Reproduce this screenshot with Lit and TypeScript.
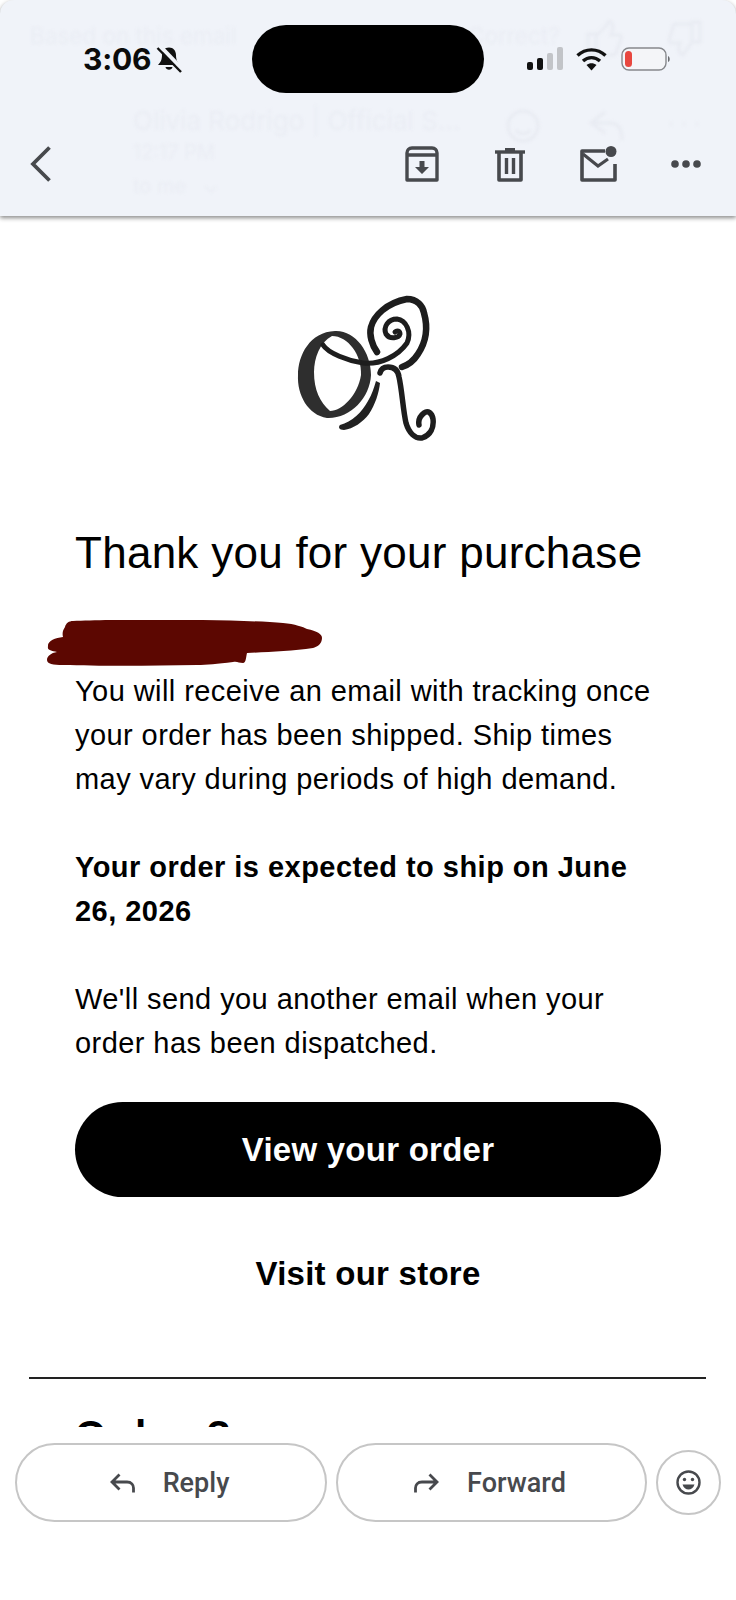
import { LitElement, html, css } from "lit";
import { customElement } from "lit/decorators.js";

const ink = "#47494d";

@customElement("app-root")
export class AppRoot extends LitElement {
  static styles = css`
    :host { display: flex; flex-direction: column; width: 736px; height: 1600px; background: #fff; overflow: hidden;
      font-family: "Liberation Sans", Arial, sans-serif; color: #000; }
    svg { display: block; flex: none; }
    .header { position: relative; z-index: 2; height: 216px; flex: none; background: #f0f3f9; box-shadow: 0 2px 4px rgba(60,60,60,.6); border-radius: 14px 14px 0 0; }
    .ghost { position: absolute; inset: 0; filter: blur(1.4px); color: #eaedf4; font-family: "Inter", sans-serif; }
    .ghost > * { position: absolute; white-space: nowrap; }
    .g1 { left: 30px; top: 22px; font-size: 22.5px; }
    .g2 { left: 468px; top: 22px; font-size: 22.5px; }
    .g3 { left: 133px; top: 105px; font-size: 26px; font-weight: 400; }
    .g4 { left: 133px; top: 140px; font-size: 20px; }
    .g5 { left: 133px; top: 174px; font-size: 20px; }
    .status { position: relative; display: flex; align-items: center; padding-top: 25px; height: 68px; }
    .time { width: 169px; padding-left: 83px; display: flex; align-items: center; gap: 5px; font: 700 30px/68px "Inter", sans-serif; letter-spacing: -.2px; color: #0b0b0b; }
    .island { width: 232px; height: 68px; border-radius: 34px; background: #000; flex: none; }
    .sys { display: flex; align-items: center; margin-left: 43px; }
    .wifi { margin-left: 13px; }
    .batt { margin-left: 14px; }
    .tools { position: relative; display: flex; align-items: center; height: 40px; margin-top: 51px; padding-left: 30px; }
    .a { margin-left: 353px; }
    .b { margin-left: 56px; }
    .c { margin-left: 55px; }
    .d { margin-left: 53px; }
    .main { height: 1211px; flex: none; overflow: hidden; box-sizing: border-box; padding: 64px 75px 0; }
    .logo { margin-left: 195px; filter: blur(.7px); }
    h1 { margin: 73px 0 0; font-weight: 400; font-size: 44px; line-height: 60px; letter-spacing: .27px; }
    .redact { margin: 37px 0 0 -28px; }
    p { margin: 3px 0 0; font-size: 29px; line-height: 44px; letter-spacing: .43px; }
    p + p { margin-top: 44px; }
    p b { font-weight: 700; letter-spacing: .47px; }
    .cta { display: flex; align-items: center; justify-content: center; height: 95px; margin-top: 37px; border-radius: 48px; background: #000; color: #fff; font-size: 33px; font-weight: 700; letter-spacing: .25px; }
    .store { margin-top: 57px; text-align: center; font-size: 33px; line-height: 40px; font-weight: 700; letter-spacing: .25px; }
    hr { margin: 83px -45px 0 -46px; border: 0; height: 2px; background: #222; }
    h2 { margin: 32px 0 0; font-size: 40px; line-height: 48px; font-weight: 700; }
    .bar { flex: 1; display: flex; align-items: flex-start; padding: 16px 0 0 15px; gap: 9px; background: #fff; }
    .pill { box-sizing: border-box; width: 312px; height: 79px; border: 2px solid #c6c6c6; border-radius: 40px; display: flex; align-items: center; justify-content: center; gap: 28px; padding-right: 3px;
      font: 500 27px "Roboto", sans-serif; color: #47494d; }
    .fw { width: 311px; }
    .smile { box-sizing: border-box; width: 65px; height: 65px; margin-top: 7px; border: 2px solid #c6c6c6; border-radius: 50%; display: flex; align-items: center; justify-content: center; }
  `;

  render() {
    return html`
      <div class="header">
        <div class="ghost">
          <span class="g1">Based on this email</span>
          <span class="g2">Correct?</span>
          <span class="g3">Olivia Rodrigo | Official S...</span>
          <span class="g4">12:17 PM</span>
          <span class="g5">to me &nbsp; ⌄</span>
          <svg style="left:585px;top:20px" width="140" height="40" viewBox="0 0 140 40" fill="none" stroke="#e8ebf2" stroke-width="3">
            <path d="M3 14v20h8V14zM11 16 21 6l3-5c6 2 4 10 2 14h8c2 0 3 2 2 4l-5 14c-1 2-2 2-3 2H11"/>
            <path d="M107 2v20h8V2zM107 4H91c-2 0-3 1-3 3l-4 13c0 2 1 3 3 3h8c-2 5-2 10 3 12l9-13"/>
          </svg>
          <svg style="left:505px;top:108px" width="200" height="36" viewBox="0 0 200 36" fill="none" stroke="#e8ebf2" stroke-width="3">
            <circle cx="18" cy="18" r="15"/><path d="M11 22c3 5 11 5 14 0"/>
            <path d="M100 4 86 15l14 10M87 15h18c8 0 12 5 12 17"/>
            <path d="M165 16h2M178 16h2M191 16h2"/>
          </svg>
        </div>
        <div class="status">
          <div class="time">3:06
            <svg width="26" height="27" viewBox="0 0 26 27">
              <path d="M13 1.500c-4.500 0-7 3.500-7 7.500 0 5-1.500 7.500-4 10h22c-2.500-2.500-4-5-4-10 0-4-2.500-7.500-7-7.500z" fill="#111"/>
              <path d="M9.500 21c.5 3.500 6.500 3.500 7 0z" fill="#111"/>
              <path d="M4 0 26 23" stroke="#f0f3f9" stroke-width="4"/>
              <path d="M1.500 2 25 26" stroke="#111" stroke-width="2.400"/>
            </svg>
          </div>
          <div class="island"></div>
          <div class="sys">
            <svg width="36" height="24" viewBox="0 0 36 24">
              <rect x="0" y="15" width="6" height="8" rx="2" fill="#111"/>
              <rect x="10" y="11" width="6" height="12" rx="2" fill="#111"/>
              <rect x="20" y="6" width="6" height="17" rx="2" fill="#c2c4c8"/>
              <rect x="30" y="0" width="6" height="23" rx="2" fill="#c2c4c8"/>
            </svg>
            <svg class="wifi" width="31" height="24" viewBox="0 0 31 24">
              <path d="M1.500 8.500C9.500 1 21.500 1 29.500 8.500" fill="none" stroke="#111" stroke-width="3.400"/>
              <path d="M7 14c5-4.500 12-4.500 17 0" fill="none" stroke="#111" stroke-width="3.400"/>
              <path d="M10.500 18c3-2.500 7-2.500 10 0l-5 5.500z" fill="#111"/>
            </svg>
            <svg class="batt" width="50" height="24" viewBox="0 0 50 24">
              <rect x="1" y="1" width="44" height="22" rx="7" fill="#f4f5f8" stroke="#86888c" stroke-width="1.400"/>
              <rect x="4" y="4" width="7" height="16" rx="3.500" fill="#e8473f"/>
              <path d="M47 9c2 .5 2.500 5.500 0 6z" fill="#6a6c70"/>
            </svg>
          </div>
        </div>
        <div class="tools">
          <svg width="22" height="38" viewBox="0 0 22 38"><path d="M19.500 2.500 3 19l16.500 16.500" fill="none" stroke=${ink} stroke-width="3.800"/></svg>
          <svg class="a" width="34" height="36" viewBox="0 0 34 36">
            <path d="M2 11V7c0-3 2-5 5-5h20c3 0 5 2 5 5v4M2 9h30v25H2z" fill="none" stroke=${ink} stroke-width="3.400" stroke-linejoin="round"/>
            <path d="M14.500 15h5v6h4.500L17 28l-7-7h4.500z" fill=${ink}/>
          </svg>
          <svg class="b" width="30" height="36" viewBox="0 0 30 36">
            <path d="M0 6h30" stroke=${ink} stroke-width="3.400"/><path d="M10 5V2h10v3" fill=${ink}/>
            <path d="M4 6v28h22V6" fill="none" stroke=${ink} stroke-width="3.600" stroke-linejoin="round"/>
            <path d="M11.500 12v16M18.500 12v16" stroke=${ink} stroke-width="3.400"/>
          </svg>
          <svg class="c" width="38" height="36" viewBox="0 0 38 36">
            <path d="M25 5H2v29h33V18" fill="none" stroke=${ink} stroke-width="3.600" stroke-linejoin="round"/>
            <path d="M3 8l15 12 10-7" fill="none" stroke=${ink} stroke-width="3.200"/>
            <circle cx="31" cy="5.500" r="5.500" fill=${ink}/>
          </svg>
          <svg class="d" width="30" height="10" viewBox="0 0 30 10" fill=${ink}>
            <circle cx="4" cy="5" r="3.800"/><circle cx="15" cy="5" r="3.800"/><circle cx="26" cy="5" r="3.800"/>
          </svg>
        </div>
      </div>

      <div class="main">
        <svg class="logo" width="180" height="170" viewBox="0 0 180 170" fill="none" stroke="#1d1d1d" stroke-linecap="round" stroke-linejoin="round">
          <path fill="#2e2e2e" stroke="none" fill-rule="evenodd" d="M65 51C85 50 101 72 101 95 100 118 80 139 57 138 38 135 27 115 28 95 28 75 40 52 65 51ZM62 56C50 62 44 78 44 92 44 110 50 122 60 131 72 131 88 115 91 95 92 75 78 56 62 56Z"/>
          <path stroke-width="5" d="M53 65C58 73 78 81 93 83 110 85 128 76 137 63 142 52 136 40 127 39 118 39 113 47 116 54 120 60 129 58 130 54 130 51 127 50 125 52"/>
          <path stroke-width="6.500" d="M107 72C102 65 99 55 101 47 104 36 116 23 137 19 147 19 153 26 154 33 158 47 156 62 148 74 143 82 138 85 132 87"/>
          <path stroke-width="5.500" d="M110 93C111 89 114 87 118 87 124 87 128 90 129 97 132 110 133 130 136 143 139 153 145 159 152 158 161 155 164 147 163 139 162 133 158 130 154 133 150 136 148 140 149 145"/>
          <path fill="#222" stroke="none" d="M70 145C82 142 92 132 98 121 102 114 104 108 106 101L110 103C109 113 105 125 99 134 93 142 83 149 74 150 69 150 68 147 70 145Z"/>
        </svg>
        <h1>Thank you for your purchase</h1>
        <svg class="redact" width="276" height="46" viewBox="0 0 276 46">
          <path fill="#5c0701" d="M18 7C19 3 22 1 26 1 70-1 190-1 236 3 248 4 256 7 260 9 270 11 275 14 275 18 275 24 270 27 266 28 245 31 220 32 200 33 199 37 199 43 196 43 192 43 190 41 186 42 170 44 160 45 150 45 100 46 50 46 16 45 6 45 0 44 0 40 0 36 4 33 10 32 4 31 0 30 1 27 0 21 8 18 16 17 15 13 16 10 18 7Z"/>
        </svg>
        <p>You will receive an email with tracking once your order has been shipped. Ship times may vary during periods of high demand.</p>
        <p><b>Your order is expected to ship on June 26, 2026</b></p>
        <p>We'll send you another email when your order has been dispatched.</p>
        <div class="cta">View your order</div>
        <div class="store">Visit our store</div>
        <hr />
        <h2>Orders?</h2>
      </div>

      <div class="bar">
        <div class="pill">
          <svg width="25" height="20" viewBox="0 0 25 20" fill="none" stroke=${ink} stroke-width="2.800"><path d="M9.500 1.500 2 9l7.500 7.500M2 9h15c4.500 0 6.500 3 6.500 6v4.500"/></svg>
          <span>Reply</span>
        </div>
        <div class="pill fw">
          <svg width="25" height="20" viewBox="0 0 25 20" fill="none" stroke=${ink} stroke-width="2.800"><path d="M15.500 1.500 23 9l-7.500 7.500M23 9H8C3.500 9 1.500 12 1.500 15v4.500"/></svg>
          <span>Forward</span>
        </div>
        <div class="smile">
          <svg width="25" height="25" viewBox="0 0 25 25">
            <circle cx="12.500" cy="12.500" r="11" fill="none" stroke=${ink} stroke-width="2.400"/>
            <circle cx="8.500" cy="9.500" r="1.700" fill=${ink}/><circle cx="16.500" cy="9.500" r="1.700" fill=${ink}/>
            <path d="M6.500 14.500h12c-1 3.500-3.500 5-6 5s-5-1.500-6-5z" fill=${ink}/>
          </svg>
        </div>
      </div>
    `;
  }
}
